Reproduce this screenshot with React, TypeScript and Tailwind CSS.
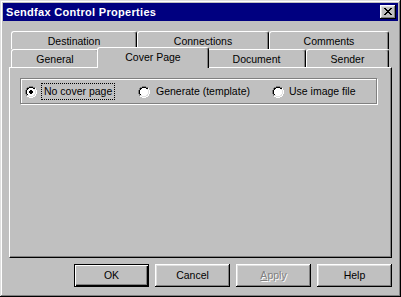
import React from "react";

const RADIO = [
  "....GGGG....",
  "..GGKKKKGG..",
  ".GKKFFFFKKW.",
  ".GKFFFFFFLW.",
  "GKFFFFFFFFLW",
  "GKFFFFFFFFLW",
  "GKFFFFFFFFLW",
  "GKFFFFFFFFLW",
  ".GKFFFFFFLW.",
  ".GLLFFFFLLW.",
  "..WWLLLLWW..",
  "....WWWW....",
];
const DOT = ["............", "............", "............", "............", ".....DD.....", "....DDDD....", "....DDDD....", ".....DD.....", "............", "............", "............", "............"];
const COL: Record<string, string> = { G: "#808080", K: "#000000", W: "#ffffff", L: "#dfdfdf", F: "#ffffff", D: "#000000" };

function Radio({ checked }: { checked?: boolean }) {
  const rects: React.ReactNode[] = [];
  RADIO.forEach((row, y) =>
    row.split("").forEach((c, x) => {
      let ch = c;
      if (checked && DOT[y][x] === "D") ch = "D";
      if (ch !== ".") rects.push(<rect key={`${x}-${y}`} x={x} y={y} width={1} height={1} fill={COL[ch]} />);
    })
  );
  return (
    <svg width={12} height={12} viewBox="0 0 12 12" shapeRendering="crispEdges" className="shrink-0">
      {rects}
    </svg>
  );
}

const X = ["XX....XX", ".XX..XX.", "..XXXX..", "...XX...", "..XXXX..", ".XX..XX.", "XX....XX"];
function CloseGlyph() {
  const rects: React.ReactNode[] = [];
  X.forEach((row, y) =>
    row.split("").forEach((c, x) => {
      if (c === "X") rects.push(<rect key={`${x}-${y}`} x={x} y={y} width={1} height={1} fill="#000" />);
    })
  );
  return (
    <svg width={8} height={7} viewBox="0 0 8 7" shapeRendering="crispEdges">
      {rects}
    </svg>
  );
}

function Tab({ label, w }: { label: string; w: number }) {
  return (
    <div
      className="h-[18px] shrink-0 bg-[#c0c0c0] border-t border-l border-r border-t-white border-l-white border-r-black rounded-t-[3px] shadow-[inset_-1px_0_#808080] flex items-center justify-center pt-[1px] text-black"
      style={{ width: w }}
    >
      {label}
    </div>
  );
}

function Button({ children, isDefault }: { children: React.ReactNode; isDefault?: boolean }) {
  return (
    <div
      className={
        "w-[75px] h-[23px] bg-[#c0c0c0] flex items-center justify-center text-black " +
        (isDefault
          ? "border border-black shadow-[inset_1px_1px_#fff,inset_-1px_-1px_#000,inset_-2px_-2px_#808080]"
          : "shadow-[inset_-1px_-1px_#000,inset_1px_1px_#fff,inset_-2px_-2px_#808080,inset_2px_2px_#dfdfdf]")
      }
    >
      {children}
    </div>
  );
}

export default function App() {
  return (
    <div className="w-[401px] h-[297px] bg-[#c0c0c0] p-[3px] font-['Liberation_Sans',Arial,sans-serif] text-[10.5px] leading-none shadow-[inset_-1px_-1px_#000,inset_1px_1px_#dfdfdf,inset_-2px_-2px_#808080,inset_2px_2px_#fff] overflow-hidden">
      {/* Title bar */}
      <div className="h-[18px] bg-[#000080] flex items-center justify-between pl-[3px] pr-[2px]">
        <span className="text-white font-bold text-[11px] tracking-[0.3px] pt-[1px]">Sendfax Control Properties</span>
        <div className="w-[16px] h-[14px] bg-[#c0c0c0] flex items-center justify-center shadow-[inset_-1px_-1px_#000,inset_1px_1px_#fff,inset_-2px_-2px_#808080,inset_2px_2px_#dfdfdf] pb-[1px]">
          <CloseGlyph />
        </div>
      </div>

      {/* Body */}
      <div className="pl-[6px] pt-[10px] flex flex-col">
        {/* Tabs */}
        <div className="pl-[2px] flex flex-col">
          <div className="flex h-[18px]">
            <Tab label="Destination" w={126} />
            <Tab label="Connections" w={132} />
            <Tab label="Comments" w={120} />
          </div>
          <div className="flex h-[18px] items-start">
            <Tab label="General" w={88} />
            <div className="relative z-10 -mt-[2px] -mx-[2px] w-[112px] h-[21px] shrink-0 bg-[#c0c0c0] border-t border-l border-r border-t-white border-l-white border-r-black rounded-t-[3px] shadow-[inset_-1px_0_#808080] flex justify-center pt-[4px] text-black">
              Cover Page
            </div>
            <Tab label="Document" w={99} />
            <Tab label="Sender" w={83} />
          </div>
        </div>

        {/* Panel */}
        <div className="w-[383px] h-[191px] border border-t-white border-l-white border-r-black border-b-black shadow-[inset_-1px_-1px_#808080] pl-[10px] pt-[10px]">
          <div className="w-[357px] h-[26px] border border-[#808080] shadow-[inset_1px_1px_#fff,1px_1px_#fff] flex items-center pl-[4px] pt-[1px]">
            <div className="w-[113px] flex items-center shrink-0">
              <Radio checked />
              <span className="ml-[4px] h-[17px] px-[2px] flex items-center border border-dotted border-black text-black">No cover page</span>
            </div>
            <div className="w-[134px] flex items-center shrink-0">
              <Radio />
              <span className="ml-[4px] px-[2px] text-black">Generate (template)</span>
            </div>
            <div className="flex items-center shrink-0">
              <Radio />
              <span className="ml-[4px] px-[1px] text-black">Use image file</span>
            </div>
          </div>
        </div>

        {/* Buttons */}
        <div className="mt-[6px] ml-[65px] flex gap-[6px]">
          <Button isDefault>OK</Button>
          <Button>Cancel</Button>
          <Button>
            <span className="text-[#808080] [text-shadow:1px_1px_0_#fff]">
              <span className="underline">A</span>pply
            </span>
          </Button>
          <Button>Help</Button>
        </div>
      </div>
    </div>
  );
}
